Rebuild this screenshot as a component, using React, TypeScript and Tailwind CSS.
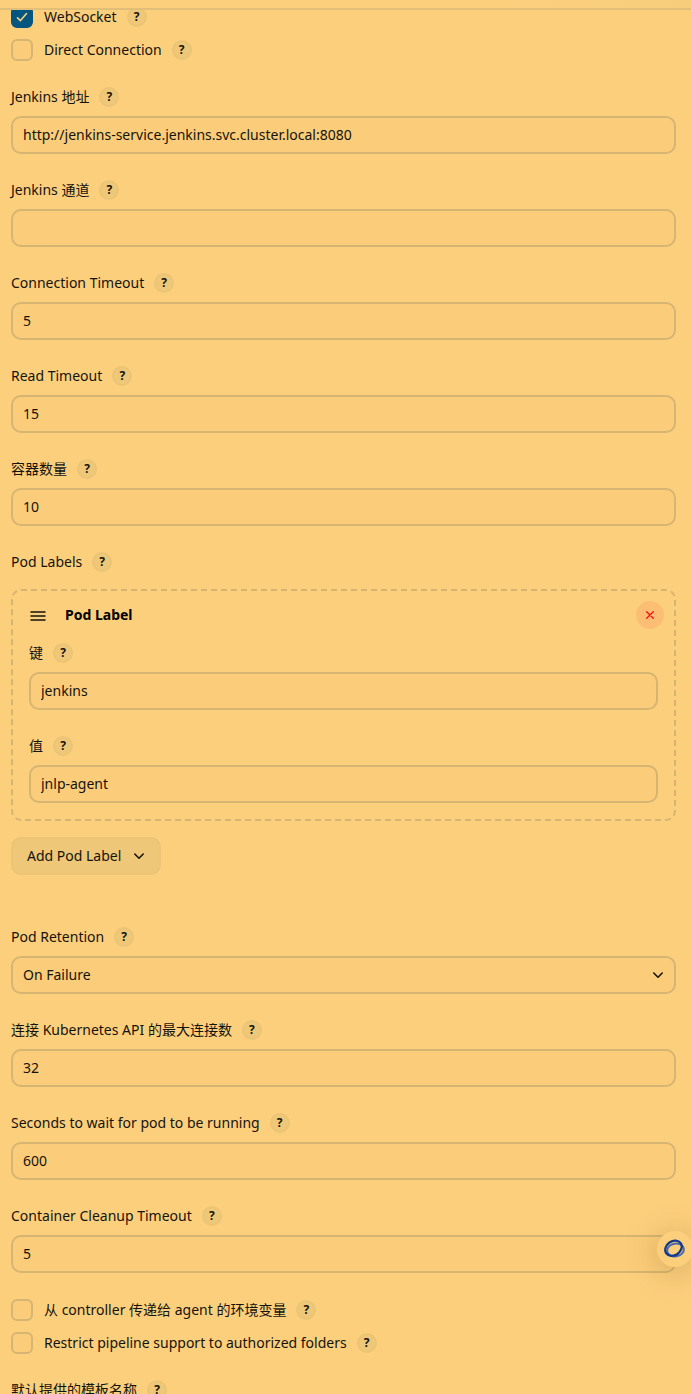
import { useId, useState, type ReactNode } from "react";

const CONTROL =
  "block w-full h-[38px] rounded-[10px] border-2 border-[#d6b471] bg-[#fbcd7a] px-2.5 text-sm text-[#14130f] outline-none focus:border-[#a98c55]";

function HelpButton({ topic }: { topic: string }) {
  return (
    <button
      type="button"
      aria-label={`Help for feature: ${topic}`}
      className="flex size-5 shrink-0 items-center justify-center rounded-full border-2 border-[#ebc476] bg-[#eec878] text-[12px] leading-none font-bold text-[#14130f]"
    >
      ?
    </button>
  );
}

function FieldLabel({ htmlFor, text }: { htmlFor?: string; text: string }) {
  return (
    <div className="mb-[9px] flex h-5 items-center gap-2.5">
      {htmlFor ? <label htmlFor={htmlFor}>{text}</label> : <span>{text}</span>}
      <HelpButton topic={text} />
    </div>
  );
}

function TextField({ label, value }: { label: string; value: string }) {
  const id = useId();
  return (
    <div>
      <FieldLabel htmlFor={id} text={label} />
      <input id={id} type="text" defaultValue={value} className={`${CONTROL} pb-0.5`} />
    </div>
  );
}

function Chevron() {
  return (
    <svg viewBox="0 0 12 12" className="size-3" fill="none" stroke="#14130f" strokeWidth="1.6" strokeLinecap="round" strokeLinejoin="round" aria-hidden="true">
      <path d="M1.8 4 6 8.200 10.200 4" />
    </svg>
  );
}

function SelectField({ label, value, options }: { label: string; value: string; options: string[] }) {
  const id = useId();
  return (
    <div>
      <FieldLabel htmlFor={id} text={label} />
      <div className="relative">
        <select id={id} defaultValue={value} className={`${CONTROL} appearance-none`}>
          {options.map((o) => (
            <option key={o}>{o}</option>
          ))}
        </select>
        <span className="pointer-events-none absolute inset-y-0 right-3 flex items-center">
          <Chevron />
        </span>
      </div>
    </div>
  );
}

function Checkbox({ label, checked = false }: { label: string; checked?: boolean }) {
  const id = useId();
  return (
    <div className="flex h-[22px] items-center gap-2.5">
      <label htmlFor={id} className="flex items-center gap-[11px]">
        <span className="relative size-[22px]">
          <input
            id={id}
            type="checkbox"
            defaultChecked={checked}
            className="peer block size-[22px] appearance-none rounded-[6px] border-2 border-[#d6b471] bg-[#fbcd7a] checked:border-[#045580] checked:bg-[#045580]"
          />
          <svg
            viewBox="0 0 22 22"
            className="pointer-events-none absolute inset-0 hidden size-[22px] peer-checked:block"
            fill="none"
            stroke="#fccf7d"
            strokeWidth="1.6"
            strokeLinecap="round"
            strokeLinejoin="round"
            aria-hidden="true"
          >
            <path d="M6.5 11.8 9.5 14.6 15.5 7.5" />
          </svg>
        </span>
        {label}
      </label>
      <HelpButton topic={label} />
    </div>
  );
}

function RepeatableCard({ title, children, onDelete }: { title: string; children: ReactNode; onDelete: () => void }) {
  return (
    <section className="mb-4 rounded-[10px] border-2 border-dashed border-[#d6b471] px-4 pt-2.5 pb-4">
      <div className="mb-3.5 flex h-7 items-center">
        <svg viewBox="0 0 18 18" className="size-[18px]" fill="none" stroke="#14130f" strokeWidth="1.6" strokeLinecap="round" aria-hidden="true">
          <path d="M2 6h14M2 10h14M2 14h14" />
        </svg>
        <h2 className="ml-[18px] text-sm font-bold text-black">{title}</h2>
        <button
          type="button"
          aria-label="Delete"
          onClick={onDelete}
          className="-mr-1.5 ml-auto flex size-7 items-center justify-center rounded-full bg-[#fcbe75]"
        >
          <svg viewBox="0 0 10 10" className="size-2.5" stroke="#f0100c" strokeWidth="1.3" strokeLinecap="round" aria-hidden="true">
            <path d="M1.700 1.700 8.300 8.300M8.300 1.700 1.700 8.300" />
          </svg>
        </button>
      </div>
      <div className="flex flex-col gap-[26px]">{children}</div>
    </section>
  );
}

export default function App() {
  const [podLabels, setPodLabels] = useState([{ id: 1, key: "jenkins", value: "jnlp-agent" }]);

  const addLabel = () => setPodLabels((l) => [...l, { id: Date.now(), key: "", value: "" }]);
  const removeLabel = (id: number) => setPodLabels((l) => l.filter((p) => p.id !== id));

  return (
    <div className="relative flex h-screen flex-col overflow-hidden bg-[#fccf7d] font-['Noto_Sans','Noto_Sans_CJK_SC',sans-serif] text-sm text-[#14130f]">
      <header className="h-2.5 shrink-0 border-b-2 border-[#e2bf78] bg-linear-to-r from-[#fccf7d] from-70% to-[#f7cd7c]" />

      <main className="min-h-0 flex-1 overflow-hidden">
        <form className="-mt-1 flex flex-col gap-[26px] pr-[15px] pl-[11px]">
          <div className="flex flex-col gap-[11px]">
            <Checkbox label="WebSocket" checked />
            <Checkbox label="Direct Connection" />
          </div>

          <TextField label="Jenkins 地址" value="http://jenkins-service.jenkins.svc.cluster.local:8080" />
          <TextField label="Jenkins 通道" value="" />
          <TextField label="Connection Timeout" value="5" />
          <TextField label="Read Timeout" value="15" />
          <TextField label="容器数量" value="10" />

          <div className="mb-[26px]">
            <div className="mb-[17px]">
              <FieldLabel text="Pod Labels" />
            </div>
            {podLabels.map((p) => (
              <RepeatableCard key={p.id} title="Pod Label" onDelete={() => removeLabel(p.id)}>
                <TextField label="键" value={p.key} />
                <TextField label="值" value={p.value} />
              </RepeatableCard>
            ))}
            <button
              type="button"
              onClick={addLabel}
              className="flex h-[38px] items-center gap-3 rounded-[10px] border-2 border-[#ebc476] bg-[#eec878] px-3.5"
            >
              Add Pod Label
              <Chevron />
            </button>
          </div>

          <SelectField label="Pod Retention" value="On Failure" options={["Always", "Default", "Never", "On Failure"]} />
          <TextField label="连接 Kubernetes API 的最大连接数" value="32" />
          <TextField label="Seconds to wait for pod to be running" value="600" />
          <TextField label="Container Cleanup Timeout" value="5" />

          <div className="flex flex-col gap-[11px]">
            <Checkbox label="从 controller 传递给 agent 的环境变量" />
            <Checkbox label="Restrict pipeline support to authorized folders" />
          </div>

          <TextField label="默认提供的模板名称" value="" />
        </form>
      </main>

      <button
        type="button"
        aria-label="Assistant"
        className="absolute -right-0.5 bottom-[127px] flex size-9 items-center justify-center rounded-full bg-[#fccf7d] shadow-[0_4px_32px_rgba(120,90,30,0.35)]"
      >
        <svg viewBox="0 0 22 20" className="h-5 w-[22px]" fill="none" aria-hidden="true">
          <ellipse cx="11.5" cy="11" rx="8.4" ry="6.4" transform="rotate(-8 11.5 11)" stroke="#4a68a8" strokeWidth="2" />
          <ellipse cx="9.5" cy="9.2" rx="8.8" ry="7" transform="rotate(-35 9.5 9.2)" stroke="#123a8c" strokeWidth="2.3" />
        </svg>
      </button>
    </div>
  );
}
